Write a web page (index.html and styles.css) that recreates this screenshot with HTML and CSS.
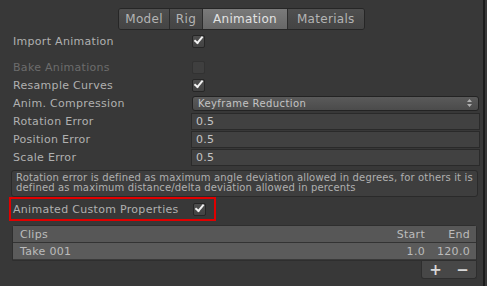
FILE: index.html
```html
<!DOCTYPE html>
<html lang="en">
<head>
    <meta charset="UTF-8">
    <title>Import Settings - Animation</title>
    <link rel="stylesheet" href="styles.css">
</head>
<body>

<div class="inspector">

    <!--tab strip-->
    <div class="tabs">
        <div class="tab">Model</div>
        <div class="tab">Rig</div>
        <div class="tab active">Animation</div>
        <div class="tab">Materials</div>
    </div>

    <div class="row first">
        <span class="label">Import Animation</span>
        <span class="check on"></span>
    </div>

    <div class="row gap disabled">
        <span class="label">Bake Animations</span>
        <span class="check"></span>
    </div>

    <div class="row">
        <span class="label">Resample Curves</span>
        <span class="check on"></span>
    </div>

    <div class="row">
        <span class="label">Anim. Compression</span>
        <div class="popup">
            <span>Keyframe Reduction</span>
            <svg class="arrows" width="5" height="8" viewBox="0 0 5 8">
                <path d="M0 3 L2.5 0 L5 3 Z M0 5 L2.5 8 L5 5 Z" fill="#b0b0b0"/>
            </svg>
        </div>
    </div>

    <div class="row">
        <span class="label">Rotation Error</span>
        <div class="field">0.5</div>
    </div>
    <div class="row">
        <span class="label">Position Error</span>
        <div class="field">0.5</div>
    </div>
    <div class="row">
        <span class="label">Scale Error</span>
        <div class="field">0.5</div>
    </div>

    <div class="helpbox">
        Rotation error is defined as maximum angle deviation allowed in degrees, for others it is
        defined as maximum distance/delta deviation allowed in percents
    </div>

    <!--highlighted option-->
    <div class="highlight">
        <span class="label">Animated Custom Properties</span>
        <span class="check on"></span>
    </div>

    <!--clip list-->
    <div class="clips">
        <div class="clips-head">
            <span class="name">Clips</span>
            <span class="start">Start</span>
            <span class="end">End</span>
        </div>
        <div class="clips-row">
            <span class="name">Take 001</span>
            <span class="start">1.0</span>
            <span class="end">120.0</span>
        </div>
    </div>
    <div class="clips-foot">
        <span class="plus">+</span>
        <span class="minus">&minus;</span>
    </div>

</div>

</body>
</html>
```

FILE: styles.css
```css
body, html {
    margin: 0;
    padding: 0;
    width: 100%;
    height: 100%;
    background: #383838;
    font-family: "DejaVu Sans", sans-serif;
    font-size: 11px;
    color: #b0b0b0;
    overflow: hidden;
}

.inspector {
    display: flex;
    flex-direction: column;
    width: 485px;
    height: 286px;
    box-sizing: border-box;
    border-right: 2px solid #1c1c1c;
}

/*tab strip*/
.tabs {
    display: flex;
    align-self: center;
    margin-top: 8px;
    height: 22px;
    border: 1px solid #262626;
    border-radius: 3px;
    box-sizing: border-box;
    overflow: hidden;
}

.tab {
    display: flex;
    align-items: center;
    padding: 0 6px;
    font-size: 12px;
    color: #b4b4b4;
    letter-spacing: 0.3px;
    background: linear-gradient(#4f4f4f, #444444);
    border-right: 1px solid #2c2c2c;
}

.tab:last-child {
    border-right: none;
    padding: 0 9px;
}

.tab.active {
    background: linear-gradient(#7a7a7a, #676767);
    color: #e2e2e2;
    padding: 0 10px;
}

.row {
    display: flex;
    align-items: center;
    height: 18px;
    flex-shrink: 0;
}

.row.first {
    margin-top: 2px;
}

.row.gap {
    margin-top: 8px;
}

.label {
    width: 178px;
    padding-left: 13px;
    flex-shrink: 0;
    white-space: nowrap;
    letter-spacing: 0.3px;
}

.disabled .label {
    color: #6c6c6c;
}

.check {
    position: relative;
    width: 11px;
    height: 11px;
    margin-left: 1px;
    border: 1px solid #262626;
    border-radius: 2px;
    background: linear-gradient(#4e4e4e, #434343);
}

.disabled .check {
    border-color: #323232;
    background: #3f3f3f;
}

.check.on::after {
    content: "";
    position: absolute;
    width: 3px;
    height: 7px;
    border: solid #f2f2f2;
    border-width: 0 2px 2px 0;
    transform: rotate(40deg);
    transform-origin: 80% 80%;
    left: 1px;
    top: -1px;
}

.popup {
    display: flex;
    align-items: center;
    justify-content: space-between;
    width: 287px;
    height: 15px;
    margin-left: 1px;
    padding: 0 6px 0 5px;
    box-sizing: border-box;
    border: 1px solid #232323;
    border-radius: 3px;
    background: linear-gradient(#5a5a5a, #4b4b4b);
    font-size: 10px;
    color: #c4c4c4;
    letter-spacing: 0.4px;
}

.field {
    display: flex;
    align-items: center;
    width: 289px;
    height: 17px;
    padding-left: 4px;
    box-sizing: border-box;
    border: 1px solid #2a2a2a;
    background: #414141;
    color: #c4c4c4;
    letter-spacing: 0.3px;
}

.helpbox {
    margin: 4px 5px 0 11px;
    padding: 2px 4px 3px 4px;
    border: 1px solid #2a2a2a;
    border-radius: 3px;
    background: #3e3e3e;
    font-size: 10px;
    line-height: 10px;
    letter-spacing: 0.15px;
    color: #b0b0b0;
}

.highlight {
    display: flex;
    align-items: center;
    width: 207px;
    height: 24px;
    margin: 0 0 0 9px;
    box-sizing: border-box;
    border: 2px solid #e10000;
}

.highlight .label {
    width: 179px;
    padding-left: 2px;
}

/*clip list*/
.clips {
    display: flex;
    flex-direction: column;
    margin: 4px 6px 0 12px;
    border: 1px solid #2e2e2e;
    border-radius: 3px 3px 0 0;
    background: #4a4a4a;
}

.clips-head, .clips-row {
    display: flex;
    align-items: center;
    height: 16px;
    padding-right: 6px;
    color: #bcbcbc;
    letter-spacing: 0.3px;
}

.clips-head {
    background: #575757;
    border-bottom: 1px solid #333333;
}

.clips-row {
    background: #5b5b5b;
    border-bottom: 1px solid #3a3a3a;
}

.clips .name {
    flex: 1;
    padding-left: 7px;
}

.clips .start {
    width: 42px;
    text-align: right;
}

.clips .end {
    width: 45px;
    text-align: right;
}

.clips-foot {
    display: flex;
    align-self: flex-end;
    justify-content: space-around;
    align-items: center;
    width: 54px;
    height: 17px;
    margin-right: 6px;
    border: 1px solid #2e2e2e;
    border-top: none;
    border-radius: 0 0 3px 3px;
    background: #474747;
    font-size: 15px;
    font-weight: bold;
    color: #d8d8d8;
}
```
